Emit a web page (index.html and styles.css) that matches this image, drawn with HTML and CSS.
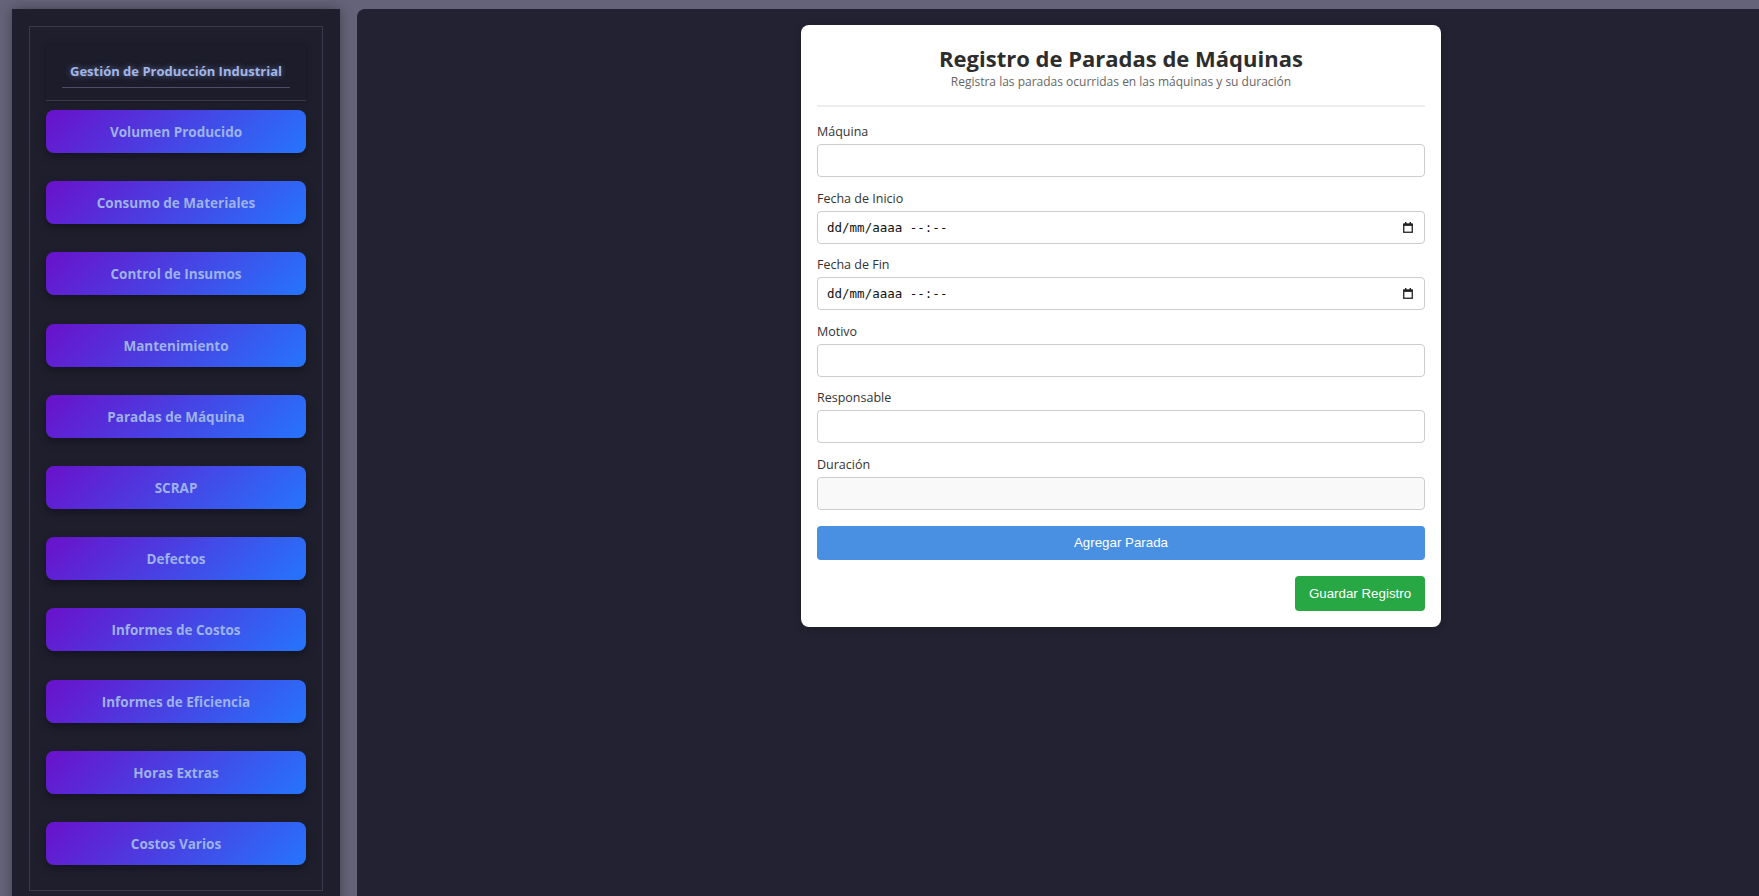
FILE: index.html
```html
<!DOCTYPE html>
<html lang="es">
<head>
<meta charset="utf-8">
<title>Registro de Paradas de Máquinas</title>
<link rel="stylesheet" href="styles.css">
</head>
<body>
<aside class="sidebar">
  <div class="sidebar-inner">
    <div class="brand">
      <h2 class="brand-title">Gestión de Producción Industrial</h2>
    </div>
    <nav class="menu">
      <a class="menu-btn">Volumen Producido</a>
      <a class="menu-btn">Consumo de Materiales</a>
      <a class="menu-btn">Control de Insumos</a>
      <a class="menu-btn">Mantenimiento</a>
      <a class="menu-btn">Paradas de Máquina</a>
      <a class="menu-btn">SCRAP</a>
      <a class="menu-btn">Defectos</a>
      <a class="menu-btn">Informes de Costos</a>
      <a class="menu-btn">Informes de Eficiencia</a>
      <a class="menu-btn">Horas Extras</a>
      <a class="menu-btn">Costos Varios</a>
    </nav>
  </div>
</aside>
<main class="main">
  <section class="card">
    <header class="card-head">
      <h1 class="card-title">Registro de Paradas de Máquinas</h1>
      <p class="card-sub">Registra las paradas ocurridas en las máquinas y su duración</p>
    </header>
    <div class="field">
      <label class="label">Máquina</label>
      <input class="input" type="text">
    </div>
    <div class="field">
      <label class="label">Fecha de Inicio</label>
      <div class="input date"><span class="date-text">dd/mm/aaaa --:--</span>
        <svg class="cal" width="10" height="11" viewBox="0 0 10 11"><rect x="0.75" y="2.25" width="8.5" height="8" fill="none" stroke="#222" stroke-width="1.3"/><rect x="0.5" y="1.5" width="9" height="2.4" fill="#222"/><rect x="2" y="0" width="1.4" height="2" fill="#222"/><rect x="6.6" y="0" width="1.4" height="2" fill="#222"/></svg>
      </div>
    </div>
    <div class="field">
      <label class="label">Fecha de Fin</label>
      <div class="input date"><span class="date-text">dd/mm/aaaa --:--</span>
        <svg class="cal" width="10" height="11" viewBox="0 0 10 11"><rect x="0.75" y="2.25" width="8.5" height="8" fill="none" stroke="#222" stroke-width="1.3"/><rect x="0.5" y="1.5" width="9" height="2.4" fill="#222"/><rect x="2" y="0" width="1.4" height="2" fill="#222"/><rect x="6.6" y="0" width="1.4" height="2" fill="#222"/></svg>
      </div>
    </div>
    <div class="field">
      <label class="label">Motivo</label>
      <input class="input" type="text">
    </div>
    <div class="field">
      <label class="label">Responsable</label>
      <input class="input" type="text">
    </div>
    <div class="field">
      <label class="label">Duración</label>
      <input class="input readonly" type="text" readonly>
    </div>
    <button class="btn btn-add" type="button">Agregar Parada</button>
    <div class="actions">
      <button class="btn btn-save" type="button">Guardar Registro</button>
    </div>
  </section>
</main>
</body>
</html>
```
FILE: styles.css
```css
* { box-sizing: border-box; }
html, body { margin: 0; height: 100%; }
body {
  background: #646379;
  display: flex;
  align-items: flex-start;
  gap: 17px;
  padding: 9px 0 0 12px;
  height: 896px;
  overflow: hidden;
  font-family: "Open Sans", "Noto Sans", sans-serif;
}

/* Sidebar */
.sidebar {
  width: 328px;
  flex: none;
  background: #1e1e2d;
  padding: 17px;
  box-shadow: 0 0 12px rgba(0,0,0,0.35);
}
.sidebar-inner {
  border: 1px solid #393a4e;
  padding: 18px 16px 25px;
}
.brand {
  border-bottom: 1px solid #393a4e;
  padding: 17px 16px 12px;
  background: #1c1c2a;
  box-shadow: 0 0 6px rgba(0,0,0,0.25);
}
.brand-title {
  margin: 0;
  text-align: center;
  font-size: 13px;
  line-height: 18px;
  font-weight: 700;
  color: #a3b6e6;
  text-shadow: 0 0 6px rgba(150,175,235,0.55);
  padding-bottom: 7px;
  border-bottom: 1px solid #4e4c66;
}
.menu {
  display: flex;
  flex-direction: column;
  gap: 28.2px;
  margin-top: 9px;
}
.menu-btn {
  display: flex;
  align-items: center;
  justify-content: center;
  height: 43px;
  padding-top: 1px;
  border-radius: 8px;
  background: linear-gradient(135deg, #6a11cb 0%, #2575fc 100%);
  color: #9db2ea;
  font-size: 13.5px;
  font-weight: 700;
  box-shadow: 0 4px 8px rgba(0,0,0,0.3);
  cursor: pointer;
}

/* Main */
.main {
  flex: 1;
  align-self: stretch;
  background: #222232;
  border-radius: 8px 0 0 0;
  padding: 16px 0 0 444px;
  min-height: 900px;
}
.card {
  width: 640px;
  background: #fff;
  border-radius: 8px;
  padding: 18px 16px 16px;
  box-shadow: 0 2px 8px rgba(0,0,0,0.2);
}
.card-head {
  text-align: center;
  border-bottom: 2px solid #eeeeee;
  padding-bottom: 14px;
  margin-bottom: 16px;
}
.card-title {
  margin: 0;
  font-size: 22px;
  line-height: 30px;
  font-weight: 700;
  color: #2d2d2d;
}
.card-sub {
  margin: 0;
  font-size: 12px;
  line-height: 18px;
  color: #666;
}
.field { margin-bottom: 12.6px; }
.label {
  display: block;
  font-size: 12.5px;
  line-height: 18px;
  color: #333;
  margin-bottom: 3px;
  padding-top: 1px;
}
.field .label { margin-top: -1px; }
.input {
  display: block;
  width: 100%;
  height: 33px;
  border: 1px solid #ccc;
  border-radius: 4px;
  background: #fff;
  padding: 0 9px;
  font-size: 13px;
  margin: 0;
  outline: none;
}
.readonly { background: #f9f9f9; }
.date {
  display: flex;
  align-items: center;
  justify-content: space-between;
  padding: 0 11px 0 9px;
}
.date-text {
  font-family: "DejaVu Sans Mono", "Liberation Mono", monospace;
  font-size: 12.5px;
  color: #111;
  white-space: pre;
}
.cal { display: block; }
.btn {
  display: block;
  border: none;
  border-radius: 4px;
  color: #fff;
  font-family: "Liberation Sans", Arial, sans-serif;
  font-size: 13.33px;
  cursor: pointer;
}
.btn-add {
  width: 100%;
  height: 34px;
  margin-top: 16px;
  background: #4a90e2;
}
.actions {
  display: flex;
  justify-content: flex-end;
  margin-top: 16px;
}
.btn-save {
  width: 130px;
  height: 35.5px;
  background: #28a745;
}
```
